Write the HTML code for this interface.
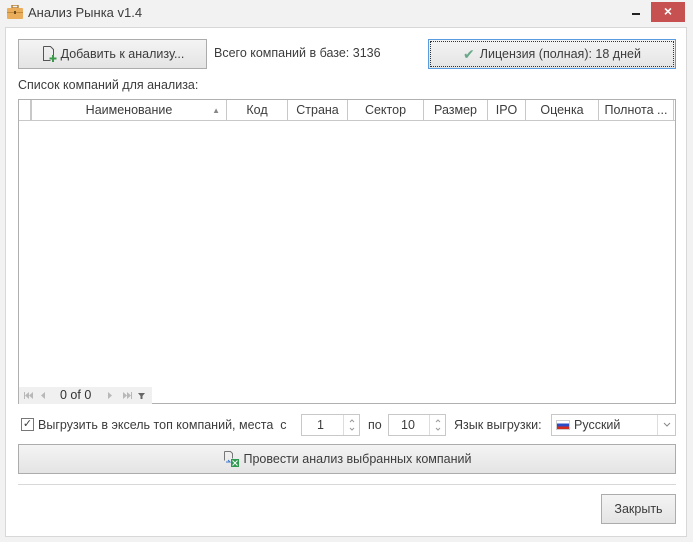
<!DOCTYPE html>
<html><head><meta charset="utf-8"><style>
*{box-sizing:border-box;margin:0;padding:0}
body{width:693px;height:542px;background:#f2f2f2;font-family:"Liberation Sans","DejaVu Sans",sans-serif;font-size:12.5px;color:#3c3c3c;position:relative;overflow:hidden}
.a{position:absolute}
.btn{position:absolute;border:1px solid #acacac;background:linear-gradient(#f4f4f4,#e4e4e4);display:flex;align-items:center;justify-content:center}
.hd{position:absolute;top:0;height:21px;border-right:1px solid #c8c8c8;text-align:center;line-height:21px}
.spin{position:absolute;height:22px;border:1px solid #c8c8c8;background:#fff}
</style></head><body>
<div class="a" style="left:7px;top:5px;width:16px;height:14px">
<svg width="16" height="14"><rect x="5" y="0" width="6" height="3" fill="none" stroke="#b07c30" stroke-width="1.4"/><rect x="0" y="3" width="16" height="11" rx="1" fill="#e9ad5b"/><rect x="0" y="7" width="16" height="1" fill="#c58a3a"/><rect x="7" y="6" width="2" height="3" fill="#6b4a1e"/></svg></div>
<div class="a" style="left:28px;top:5px;font-size:13px">Анализ Рынка v1.4</div>
<div class="a" style="left:632px;top:13px;width:8px;height:2px;background:#222"></div>
<div class="a" style="left:651px;top:2px;width:34px;height:20px;background:#c75050;color:#fff;text-align:center;font-size:14px;line-height:19px;font-weight:bold">×</div>
<div class="a" style="left:5px;top:27px;width:682px;height:510px;background:#fff;border:1px solid #d8d8d8"></div>

<div class="btn" style="left:18px;top:39px;width:189px;height:30px"><svg width="16" height="18" style="margin-right:4px"><path d="M2.5 1.5h7l3 3v7M2.5 1.5v14h7" fill="none" stroke="#555"/><path d="M12 10v7M8.5 13.5h7" stroke="#3a9a4a" stroke-width="2"/></svg>Добавить к анализу...</div>
<div class="a" style="left:214px;top:46px">Всего компаний в базе: 3136</div>
<div class="btn" style="left:428px;top:39px;width:248px;height:30px;border:1px solid #5b9be0;outline:1px dotted #333;outline-offset:-3px"><span style="color:#6aa88a;font-size:14px;margin-right:5px">✔</span>Лицензия (полная): 18 дней</div>
<div class="a" style="left:18px;top:78px">Список компаний для анализа:</div>

<div class="a" style="left:18px;top:99px;width:658px;height:305px;border:1px solid #b0b0b0;background:#fff">
<div class="a" style="left:0;top:0;width:656px;height:21px;border-bottom:1px solid #c8c8c8">
<div class="hd" style="left:0;width:13px;border-right:2px solid #c8c8c8"></div>
<div class="hd" style="left:13px;width:195px">Наименование<span style="position:absolute;right:6px;top:0;font-size:8px;color:#888">▲</span></div>
<div class="hd" style="left:208px;width:61px">Код</div>
<div class="hd" style="left:269px;width:60px">Страна</div>
<div class="hd" style="left:329px;width:76px">Сектор</div>
<div class="hd" style="left:405px;width:64px">Размер</div>
<div class="hd" style="left:469px;width:38px">IPO</div>
<div class="hd" style="left:507px;width:73px">Оценка</div>
<div class="hd" style="left:580px;width:75px">Полнота ...</div>
</div>
<div class="a" style="left:0;top:287px;width:133px;height:17px;background:#f0f0f0">
<svg class="a" style="left:0;top:0" width="133" height="17"><g fill="#b8b8b8"><rect x="5" y="5" width="1" height="7"/><path d="M10 5v7l-4-3.5zM14 5v7l-4-3.5zM26 5v7l-4-3.5zM89 5v7l4-3.5zM104 5v7l4-3.5zM108 5v7l4-3.5z"/><rect x="112" y="5" width="1" height="7"/></g><path d="M119 6h7l-2.5 3v3h-2v-3z" fill="#666"/></svg>
<span class="a" style="left:41px;top:1px;color:#333">0 of 0</span></div>
</div>

<div class="a" style="left:21px;top:418px;width:13px;height:13px;border:1px solid #777;background:#fff;font-size:11px;line-height:11px;text-align:center">✓</div>
<div class="a" style="left:38px;top:418px">Выгрузить в эксель топ компаний, места&nbsp; с</div>
<div class="spin" style="left:301px;top:414px;width:59px"><span class="a" style="left:15px;top:3px">1</span><svg class="a" style="left:41px;top:0;border-left:1px solid #ddd" width="16" height="20"><path d="M6 7l2-2 2 2M6 13l2 2 2-2" fill="none" stroke="#999"/></svg></div>
<div class="a" style="left:368px;top:418px">по</div>
<div class="spin" style="left:388px;top:414px;width:58px"><span class="a" style="left:12px;top:3px">10</span><svg class="a" style="left:40px;top:0;border-left:1px solid #ddd" width="16" height="20"><path d="M6 7l2-2 2 2M6 13l2 2 2-2" fill="none" stroke="#999"/></svg></div>
<div class="a" style="left:454px;top:418px">Язык выгрузки:</div>
<div class="spin" style="left:551px;top:414px;width:125px"><span class="a" style="left:4px;top:5px;width:14px;height:10px;background:linear-gradient(#fff 33%,#2a4cc8 33%,#2a4cc8 66%,#d52b1e 66%);border:1px solid #ccc"></span><span class="a" style="left:22px;top:3px">Русский</span><svg class="a" style="left:105px;top:0;border-left:1px solid #ddd" width="18" height="20"><path d="M6 8l3 3 3-3" fill="none" stroke="#888"/></svg></div>

<div class="btn" style="left:18px;top:444px;width:658px;height:30px"><svg width="18" height="18" style="margin-right:3px"><path d="M2.5 1.5h6l2 2v5" fill="none" stroke="#777"/><path d="M2.5 1.5v9" stroke="#777"/><path d="M4 12h4l-2-2" fill="none" stroke="#3a7ad0"/><rect x="9" y="9" width="8" height="8" fill="#2e9a50"/><path d="M10.5 10.5l5 5M15.5 10.5l-5 5" stroke="#fff"/></svg>Провести анализ выбранных компаний</div>
<div class="a" style="left:18px;top:484px;width:658px;height:1px;background:#d8d8d8"></div>
<div class="btn" style="left:601px;top:494px;width:75px;height:30px">Закрыть</div>
</body></html>
